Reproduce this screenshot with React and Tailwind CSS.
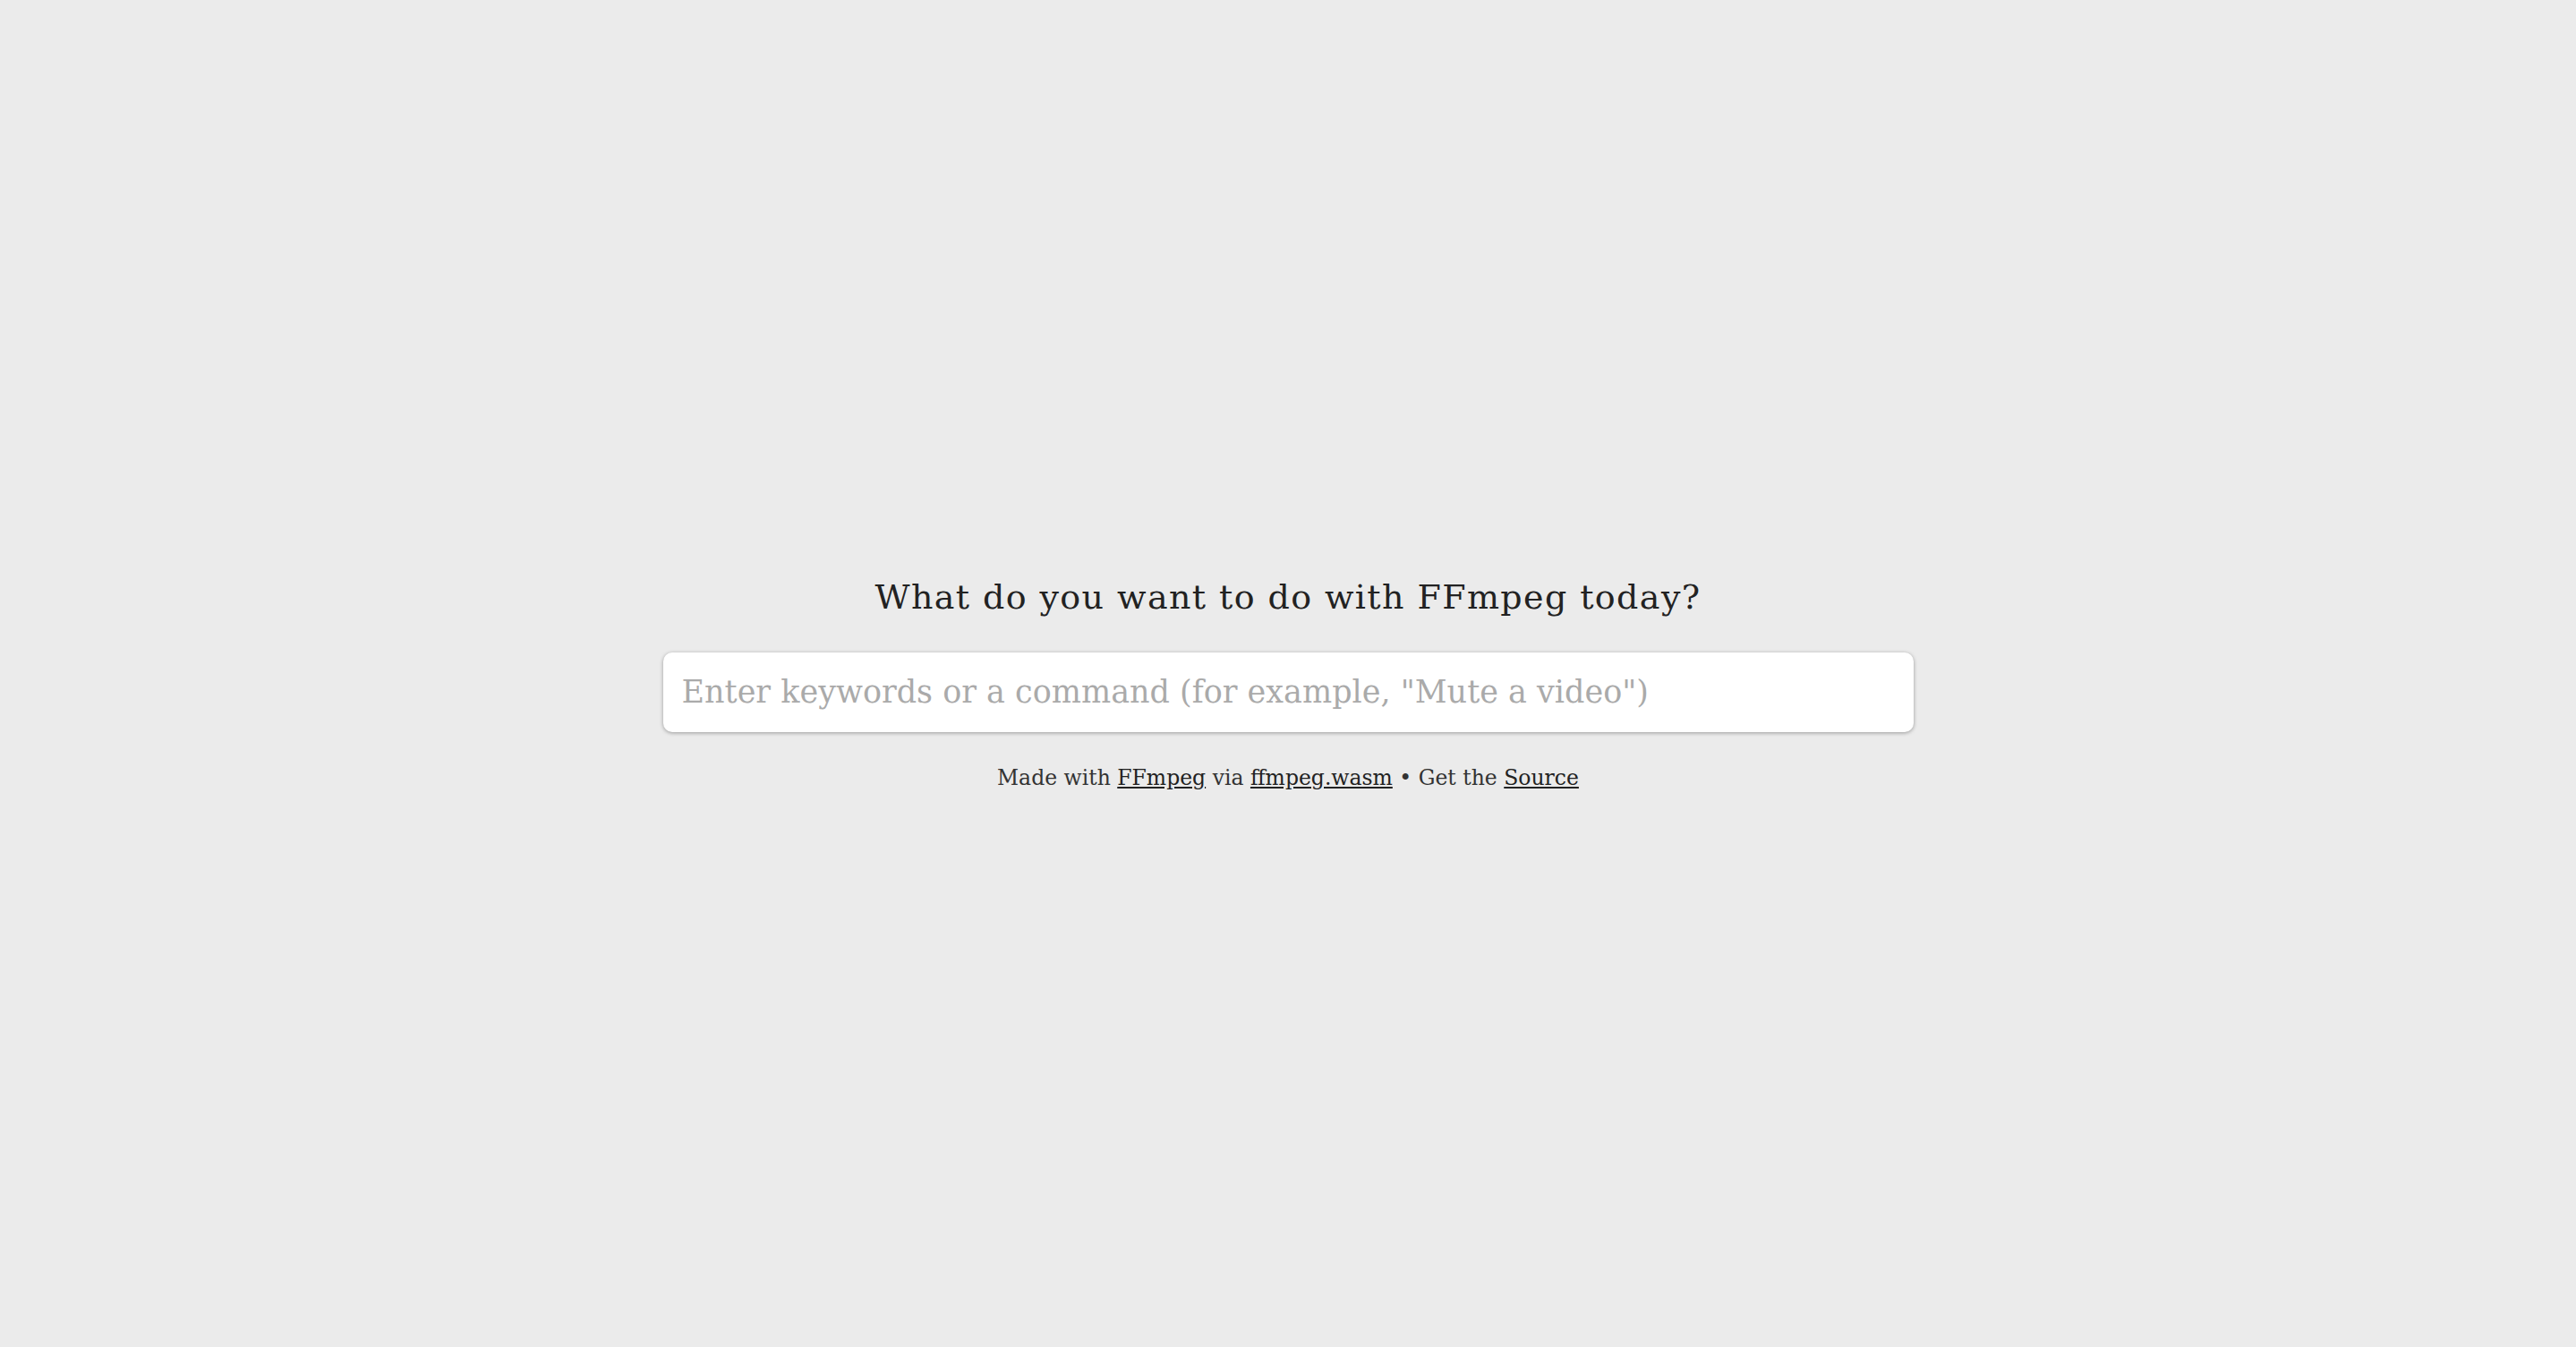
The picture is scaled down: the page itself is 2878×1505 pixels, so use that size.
import React from "react";

const slab = { fontFamily: '"DejaVu Serif", "Liberation Serif", serif' };

export default function App() {
  return (
    <div
      className="min-h-screen w-full bg-[#ebebeb] flex flex-col items-center justify-center pt-[21px]"
      style={slab}
    >
      <h1 className="text-[38px] leading-[56px] tracking-[1.4px] text-[#222] font-normal">
        What do you want to do with FFmpeg today?
      </h1>
      <input
        type="text"
        placeholder='Enter keywords or a command (for example, "Mute a video")'
        className="mt-[34px] w-[1397px] h-[89px] bg-white rounded-[10px] px-[21px] text-[35px] text-[#222] placeholder:text-[#aaa] shadow-[0_1px_4px_rgba(0,0,0,0.35)] outline-none"
        style={slab}
      />
      <p className="mt-[34px] text-[23.5px] text-[#333]">
        Made with{" "}
        <a href="#" className="underline text-[#222]">FFmpeg</a>
        {" "}via{" "}
        <a href="#" className="underline text-[#222]">ffmpeg.wasm</a>
        {" "}• Get the{" "}
        <a href="#" className="underline text-[#222]">Source</a>
      </p>
    </div>
  );
}
